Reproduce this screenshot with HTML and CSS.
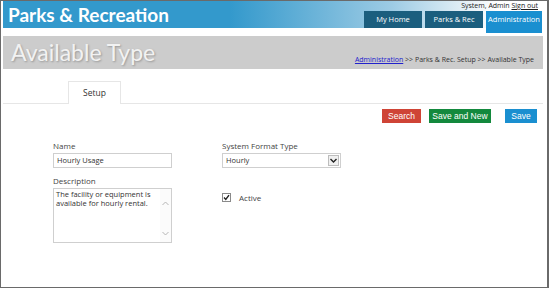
FILE: index.html
```html
<!DOCTYPE html>
<html lang="en">
	<head>
		<meta charset="UTF-8" />
		<meta name="viewport" content="width=device-width, initial-scale=1.0" />
		<title>Available Type</title>
		<link rel="stylesheet" href="styles.css">
	</head>
	<body>
		<div class="frame">
			<header class="masthead">
				<div class="brand">Parks &amp; Recreation</div>
				<div class="masthead-right">
					<div class="user">System, Admin <a href="#">Sign out</a></div>
					<nav class="tabs">
						<a class="tab" href="#">My Home</a>
						<a class="tab" href="#">Parks &amp; Rec</a>
						<a class="tab active" href="#">Administration</a>
					</nav>
				</div>
			</header>

			<div class="page-title">
				<h1>Available Type</h1>
				<div class="crumbs">
					<a href="#">Administration</a> &gt;&gt; Parks &amp; Rec. Setup &gt;&gt; Available Type
				</div>
			</div>

			<div class="subtabs">
				<span class="subtab">Setup</span>
			</div>

			<div class="actions">
				<button class="btn btn-search">Search</button>
				<button class="btn btn-savenew">Save and New</button>
				<button class="btn btn-save">Save</button>
			</div>

			<div class="form">
				<div class="col">
					<label class="label">Name</label>
					<div class="field">Hourly Usage</div>
					<label class="label label-gap">Description</label>
					<div class="textarea">
						<div class="textarea-text">The facility or equipment is available for hourly rental.</div>
						<div class="scroll">
							<svg width="7" height="5" viewBox="0 0 7 5"><path d="M0.5 4 L3.5 1 L6.5 4" fill="none" stroke="#b5b5b5" stroke-width="1"/></svg>
							<svg width="7" height="5" viewBox="0 0 7 5"><path d="M0.5 1 L3.5 4 L6.5 1" fill="none" stroke="#b5b5b5" stroke-width="1"/></svg>
						</div>
					</div>
				</div>
				<div class="col">
					<label class="label">System Format Type</label>
					<div class="field select">
						<span>Hourly</span>
						<span class="select-btn">
							<svg width="7" height="5" viewBox="0 0 7 5"><path d="M0.5 1 L3.5 4 L6.5 1" fill="none" stroke="#222" stroke-width="1.4"/></svg>
						</span>
					</div>
					<div class="check-row">
						<span class="check">
							<svg width="7" height="7" viewBox="0 0 7 7"><path d="M1 3.5 L2.8 5.5 L6 1.2" fill="none" stroke="#222" stroke-width="1.4"/></svg>
						</span>
						<span>Active</span>
					</div>
				</div>
			</div>
		</div>
	</body>
</html>
```

FILE: styles.css
```css
body {
	margin: 0;
	font-family: 'Open Sans', 'Liberation Sans', sans-serif;
	color: #444;
}
.frame {
	box-sizing: border-box;
	width: 549px;
	height: 288px;
	border: 1px solid #6a6a6a;
	border-right-width: 2px;
	padding: 0 4px 0 2px;
	background: #fff;
	overflow: hidden;
}
.masthead {
	display: flex;
	justify-content: space-between;
	height: 27px;
	background: linear-gradient(to right, #3399cc 0%, #3399cc 42%, #9dcbe4 72%, #e6f1f7 86%, #fff 92%);
}
.brand {
	padding-left: 5px;
	font-family: Lato, 'Open Sans', sans-serif;
	font-weight: 700;
	font-size: 19px;
	line-height: 27px;
	color: #fff;
}
.masthead-right {
	display: flex;
	flex-direction: column;
	align-items: flex-end;
	padding-right: 1px;
}
.user {
	height: 10px;
	padding-right: 4px;
	font-size: 7px;
	line-height: 10px;
	color: #222;
}
.user a {
	color: #222;
}
.tabs {
	display: flex;
	align-items: flex-start;
	gap: 3px;
}
.tab {
	width: 58px;
	height: 17px;
	line-height: 17px;
	text-align: center;
	font-size: 7.5px;
	color: #fff;
	text-decoration: none;
	background: #1b5e7e;
}
.tab.active {
	width: 56px;
	height: 22px;
	background: #1a8fd0;
}
.page-title {
	display: flex;
	justify-content: space-between;
	align-items: flex-end;
	height: 33px;
	margin-top: 8px;
	background: #cccccc;
}
.page-title h1 {
	margin: 0;
	padding-left: 8px;
	font-family: Lato, 'Open Sans', sans-serif;
	font-weight: 400;
	font-size: 23px;
	line-height: 33px;
	color: #f2f2f2;
	text-shadow: 1px 1px 2px rgba(0, 0, 0, 0.25);
}
.crumbs {
	padding: 0 9px 4px 0;
	font-size: 7px;
	line-height: 10px;
	color: #333;
}
.crumbs a {
	color: #2222cc;
}
.subtabs {
	display: flex;
	margin-top: 12px;
	padding-left: 65px;
	border-bottom: 1px solid #e6e6e6;
}
.subtab {
	box-sizing: border-box;
	width: 53px;
	height: 23px;
	margin-bottom: -1px;
	border: 1px solid #e6e6e6;
	border-bottom: none;
	background: #fff;
	text-align: center;
	font-size: 8.5px;
	line-height: 21px;
	color: #333;
}
.actions {
	display: flex;
	justify-content: flex-end;
	margin-top: 5px;
	padding-right: 6px;
}
.btn {
	height: 14px;
	padding: 0;
	border: none;
	font-family: 'Liberation Sans', Arial, sans-serif;
	font-size: 8.5px;
	line-height: 14px;
	color: #fff;
}
.btn-search {
	width: 39px;
	background: #cf4436;
}
.btn-savenew {
	width: 62px;
	margin-left: 8px;
	background: #13893d;
}
.btn-save {
	width: 32px;
	margin-left: 14px;
	background: #1a8fd0;
}
.form {
	display: flex;
	gap: 50px;
	margin-top: 17px;
	padding-left: 50px;
}
.col {
	display: flex;
	flex-direction: column;
	width: 119px;
}
.label {
	font-size: 8px;
	line-height: 11px;
	margin-bottom: 2px;
	color: #444;
}
.label-gap {
	margin-top: 7px;
}
.field {
	box-sizing: border-box;
	height: 15px;
	padding: 0 3px;
	border: 1px solid #cfcfcf;
	font-size: 7.5px;
	line-height: 13px;
	color: #333;
}
.select {
	display: flex;
	justify-content: space-between;
	align-items: center;
	padding-right: 1px;
}
.select-btn {
	display: flex;
	align-items: center;
	justify-content: center;
	box-sizing: border-box;
	width: 11px;
	height: 11px;
	border: 1px solid #bdbdbd;
	background: #f0f0f0;
}
.textarea {
	display: flex;
	box-sizing: border-box;
	height: 55px;
	border: 1px solid #cfcfcf;
}
.textarea-text {
	flex: 1;
	padding: 1px 2px;
	font-size: 7.5px;
	line-height: 8.5px;
	color: #333;
}
.scroll {
	display: flex;
	flex-direction: column;
	justify-content: space-between;
	align-items: center;
	width: 11px;
	padding: 12px 0 6px;
	background: #fbfbfb;
}
.check-row {
	display: flex;
	align-items: center;
	gap: 8px;
	margin-top: 24px;
	font-size: 8px;
	color: #444;
}
.check {
	display: flex;
	align-items: center;
	justify-content: center;
	box-sizing: border-box;
	width: 9px;
	height: 9px;
	border: 1px solid #8a8a8a;
	background: #fff;
}
```
